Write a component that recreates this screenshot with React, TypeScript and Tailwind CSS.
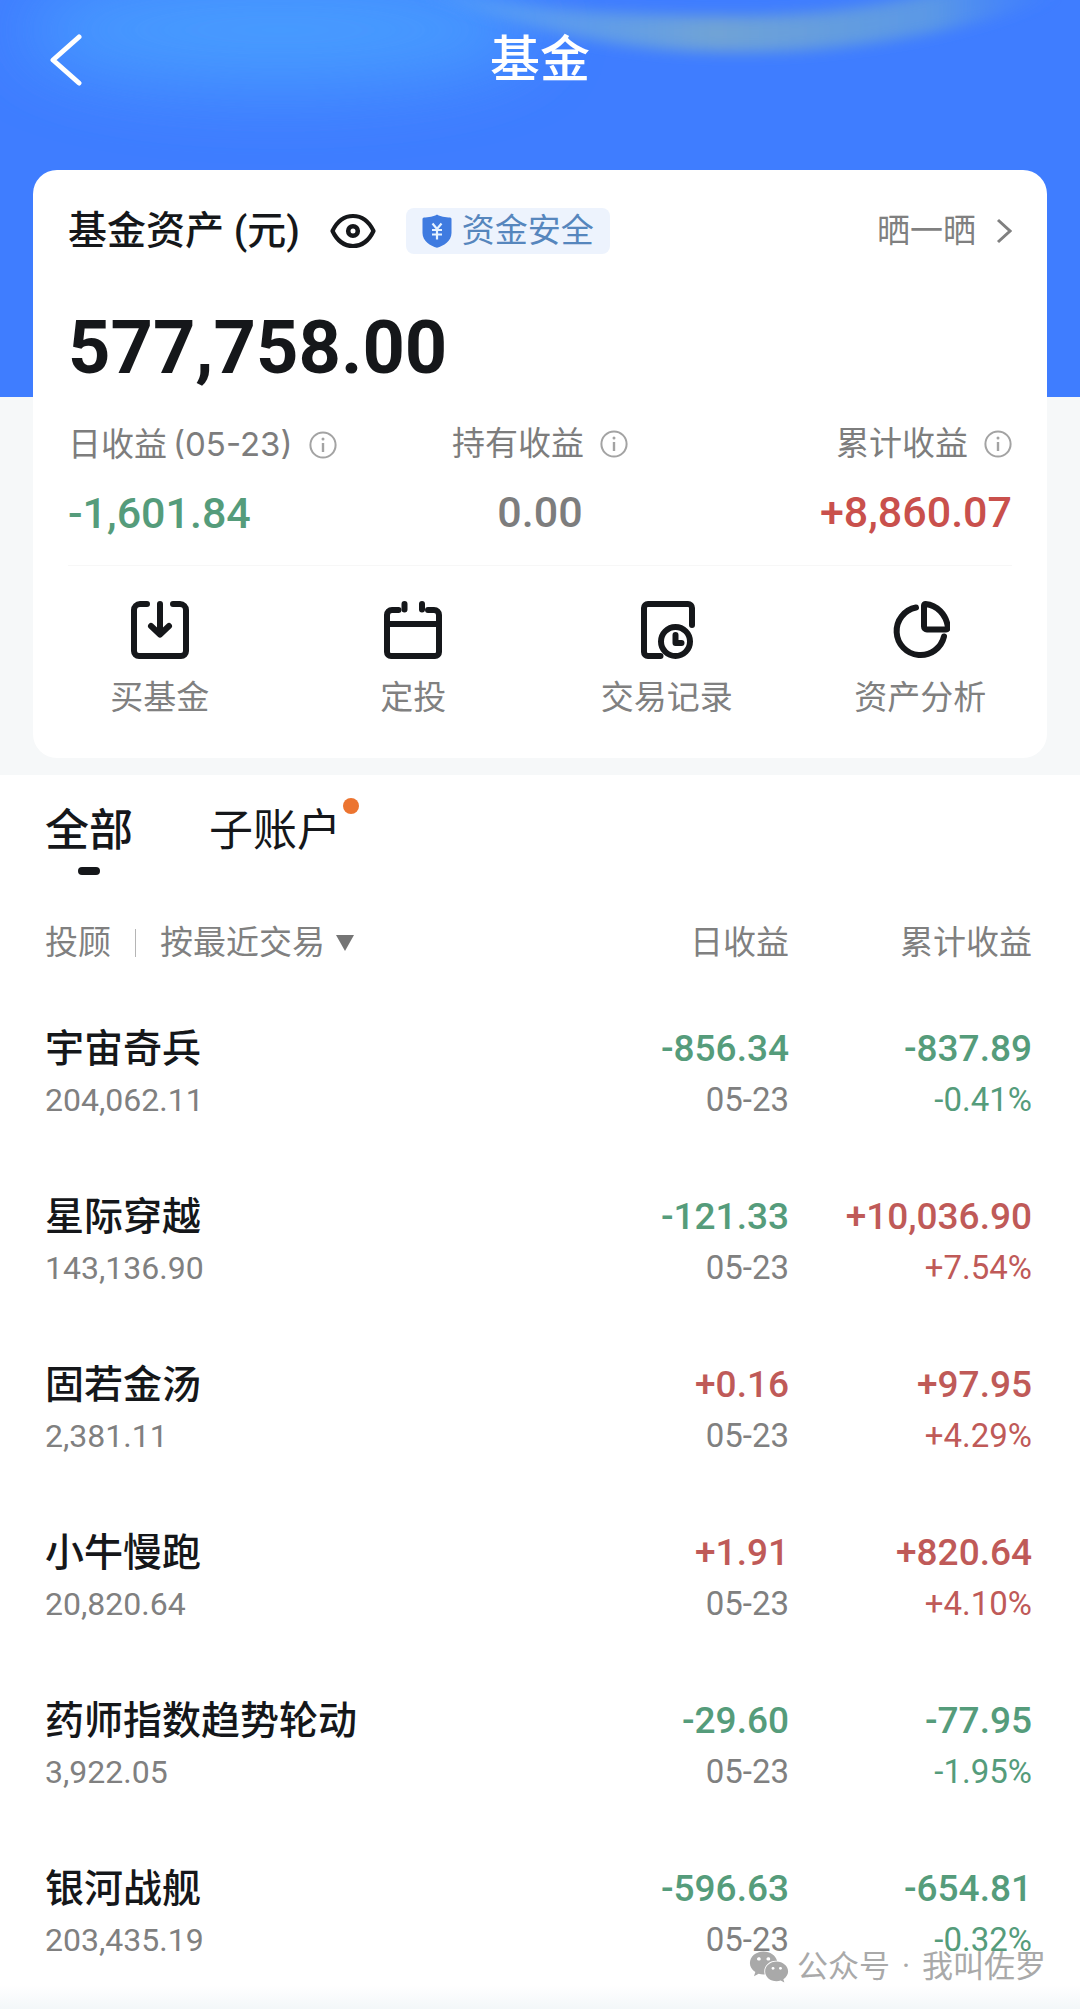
import React from 'react';
import { FaWeixin } from 'react-icons/fa';

interface Holding {
  name: string;
  amount: string;
  daily: string;
  date: string;
  total: string;
  rate: string;
}

const holdings: Holding[] = [
  { name: '宇宙奇兵', amount: '204,062.11', daily: '-856.34', date: '05-23', total: '-837.89', rate: '-0.41%' },
  { name: '星际穿越', amount: '143,136.90', daily: '-121.33', date: '05-23', total: '+10,036.90', rate: '+7.54%' },
  { name: '固若金汤', amount: '2,381.11', daily: '+0.16', date: '05-23', total: '+97.95', rate: '+4.29%' },
  { name: '小牛慢跑', amount: '20,820.64', daily: '+1.91', date: '05-23', total: '+820.64', rate: '+4.10%' },
  { name: '药师指数趋势轮动', amount: '3,922.05', daily: '-29.60', date: '05-23', total: '-77.95', rate: '-1.95%' },
  { name: '银河战舰', amount: '203,435.19', daily: '-596.63', date: '05-23', total: '-654.81', rate: '-0.32%' },
];

// red for gains, green for losses
function trendColor(value: string) {
  return value.startsWith('-') ? 'text-[#559c7b]' : 'text-[#bf5a58]';
}

function InfoIcon() {
  return (
    <svg viewBox="0 0 28 28" className="w-7 h-7 shrink-0" fill="none" stroke="#a3a3a3" strokeWidth="2">
      <circle cx="14" cy="14" r="12.6" />
      <path d="M14 12v9" strokeWidth="2.4" />
      <circle cx="14" cy="8" r="1.5" fill="#a3a3a3" stroke="none" />
    </svg>
  );
}

function EyeIcon() {
  return (
    <svg viewBox="0 0 46 36" className="w-[46px] h-9" fill="none" stroke="#15171a" strokeWidth="4.200">
      <path d="M2.500 18C7 8.500 14 3 23 3s16 5.500 20.500 15C39 27.500 32 33 23 33S7 27.500 2.500 18Z" strokeLinejoin="round" />
      <circle cx="23" cy="18" r="4.800" strokeWidth="4.600" />
    </svg>
  );
}

function ShieldIcon() {
  return (
    <svg viewBox="0 0 30 34" className="w-[30px] h-[34px]">
      <path
        d="M15 0.500C17.500 2.500 24 3.500 28 3.600a1.500 1.500 0 0 1 1.500 1.500V19c0 8-8 13-14.500 14.700C8.500 32 0.500 27 0.500 19V5.100A1.500 1.500 0 0 1 2 3.600C6 3.500 12.500 2.500 15 0.500Z"
        fill="#3f7be0"
      />
      <path d="M10.500 9.500 15 15l4.500-5.500M15 15v10.500M10 16h10M10 20.500h10" fill="none" stroke="#e6f3ff" strokeWidth="2.200" />
    </svg>
  );
}

function BuyIcon() {
  return (
    <>
      <path d="M17 4H10a6 6 0 0 0-6 6v41a5 5 0 0 0 5 5h42a5 5 0 0 0 5-5V10a6 6 0 0 0-6-6h-7" />
      <path d="M30 4v29M21 26l9 8.500 9-8.500" />
    </>
  );
}

function PlanIcon() {
  return (
    <>
      <path d="M15.500 10H9a5 5 0 0 0-5 5v37a4 4 0 0 0 4 4h44a4 4 0 0 0 4-4V15a5 5 0 0 0-5-5h-6" />
      <path d="M4 24h52M21.500 4v5.500M39 4v5.500" />
    </>
  );
}

function RecordIcon() {
  return (
    <>
      <path d="M23.500 56H11a4 4 0 0 1-4-4V8a4 4 0 0 1 4-4h40a4 4 0 0 1 4 4v17" />
      <circle cx="38.500" cy="41.500" r="14.500" />
      <path d="M38.500 35v8h6" />
    </>
  );
}

function PieIcon() {
  return (
    <>
      <path d="M26 7.500A24 24 0 1 0 54 36.500" />
      <path d="M35.500 4C47 5 56 14.500 58 27a2 2 0 0 1-2 2.500H37a3 3 0 0 1-3-3V5.500A1.500 1.500 0 0 1 35.500 4Z" />
    </>
  );
}

const actions = [
  { label: '买基金', icon: <BuyIcon /> },
  { label: '定投', icon: <PlanIcon /> },
  { label: '交易记录', icon: <RecordIcon /> },
  { label: '资产分析', icon: <PieIcon /> },
];

function Header() {
  return (
    <header className="relative grid grid-cols-3 items-center h-[120px] mb-[50px] px-12 text-white">
      <button type="button" aria-label="返回" className="justify-self-start">
        <svg viewBox="0 0 34 54" className="w-[34px] h-[54px]" fill="none" stroke="currentColor" strokeWidth="5">
          <path d="M31 4 5 27l26 23" strokeLinecap="round" strokeLinejoin="round" />
        </svg>
      </button>
      <h1 className="text-center text-[50px] leading-[60px] font-medium">基金</h1>
    </header>
  );
}

// soft light streaks behind the title bar
function HeaderGlow() {
  return (
    <svg viewBox="0 0 1080 397" preserveAspectRatio="none" className="absolute inset-x-0 top-0 w-full h-[397px]">
      <defs>
        <filter id="soft" x="-30%" y="-80%" width="160%" height="260%">
          <feGaussianBlur stdDeviation="7" />
        </filter>
        <filter id="wide" x="-50%" y="-80%" width="200%" height="260%">
          <feGaussianBlur stdDeviation="36" />
        </filter>
        <linearGradient id="streak" x1="430" x2="1060" y1="0" y2="0" gradientUnits="userSpaceOnUse">
          <stop offset="0" stopColor="#57a2fa" stopOpacity="0.6" />
          <stop offset="0.45" stopColor="#70a3d6" />
          <stop offset="0.8" stopColor="#5a98e6" />
          <stop offset="1" stopColor="#4a8cf5" stopOpacity="0" />
        </linearGradient>
      </defs>
      <ellipse cx="280" cy="30" rx="260" ry="55" fill="#4aa0ff" opacity="0.900" filter="url(#wide)" />
      <path
        d="M420 -10C520 8 620 16 730 16S900 2 980 -20L1080 -10C980 28 860 52 740 52S540 34 420 -10Z"
        fill="url(#streak)"
        filter="url(#soft)"
      />
    </svg>
  );
}

function AssetCard() {
  return (
    <section className="relative mx-[33px] rounded-3xl bg-white pt-9 pb-[38px]">
      <div className="px-[35px]">
        <div className="flex items-center h-[50px]">
          <h2 className="text-[39px] font-medium text-[#15171a]">基金资产 (元)</h2>
          <button type="button" aria-label="隐藏金额" className="ml-[30px]">
            <EyeIcon />
          </button>
          <a href="#safety" className="ml-[30px] flex items-center gap-2.5 h-[46px] rounded-lg bg-[#edf3fd] px-4 text-[33px] text-[#5686bd]">
            <ShieldIcon />
            资金安全
          </a>
          <a href="#share" className="ml-auto flex items-center gap-5 text-[33px] text-[#808080]">
            晒一晒
            <svg viewBox="0 0 16 26" className="w-4 h-[26px]" fill="none" stroke="currentColor" strokeWidth="3">
              <path d="m2 2 12 11L2 24" />
            </svg>
          </a>
        </div>

        <p className="mt-[52px] text-[74px] leading-[80px] font-bold text-[#15171a]">577,758.00</p>

        <dl className="mt-[34px] grid grid-cols-[1fr_auto_1fr] border-b border-[#f7f7f7] pb-[26px] text-[#7d7d7d]">
          <div>
            <dt className="flex items-center gap-4 text-[33px] leading-[44px]">
              <span>日收益<span className="ml-1.5 font-[Inter]">(05-23)</span></span>
              <InfoIcon />
            </dt>
            <dd className="mt-5 text-[43px] leading-[52px] font-medium text-[#559c7b]">-1,601.84</dd>
          </div>
          <div className="text-center">
            <dt className="flex items-center gap-4 text-[33px] leading-[44px]">
              持有收益
              <InfoIcon />
            </dt>
            <dd className="mt-5 text-[43px] leading-[52px] font-medium">0.00</dd>
          </div>
          <div className="text-right">
            <dt className="flex items-center justify-end gap-4 text-[33px] leading-[44px]">
              累计收益
              <InfoIcon />
            </dt>
            <dd className="mt-5 text-[43px] leading-[52px] font-medium text-[#c9504c]">+8,860.07</dd>
          </div>
        </dl>
      </div>

      <nav className="mt-[34px] grid grid-cols-4">
        {actions.map((action) => (
          <a key={action.label} href="#action" className="flex flex-col items-center gap-4 text-[33px] leading-[44px] text-[#808080]">
            <svg
              viewBox="0 0 60 60"
              className="w-[60px] h-[60px]"
              fill="none"
              stroke="#15171a"
              strokeWidth="6"
              strokeLinecap="round"
              strokeLinejoin="round"
            >
              {action.icon}
            </svg>
            {action.label}
          </a>
        ))}
      </nav>
    </section>
  );
}

function Tabs() {
  return (
    <div className="flex gap-[76px] text-[44px] leading-[60px] text-[#15171a]">
      <button type="button" className="flex flex-col items-center gap-[6px] font-medium">
        全部
        <span className="w-[22px] h-2 rounded-full bg-[#15171a]" />
      </button>
      <button type="button" className="relative self-start">
        子账户
        <span className="absolute -right-[18px] -top-[3px] w-4 h-4 rounded-full bg-[#ec7430]" />
      </button>
    </div>
  );
}

function HoldingTable() {
  return (
    <table className="mt-[46px] w-full text-[#808080]">
      <thead>
        <tr className="text-[33px] leading-[44px]">
          <th className="pb-6 font-normal text-left">
            <div className="flex items-center">
              <span>投顾</span>
              <span className="mx-6 w-px h-7 bg-[#b5b5b5]" />
              <select aria-label="排序方式" className="appearance-none w-[168px] leading-[44px]">
                <option>按最近交易</option>
              </select>
              <svg viewBox="0 0 18 16" className="w-[18px] h-4 ml-2" fill="#757575">
                <path d="M0 0h18L9 16Z" />
              </svg>
            </div>
          </th>
          <th className="w-[240px] pb-6 font-normal text-right">日收益</th>
          <th className="w-[243px] pb-6 font-normal text-right">累计收益</th>
        </tr>
      </thead>
      <tbody>
        {holdings.map((item) => (
          <tr key={item.name}>
            <td className="py-[33px]">
              <div className="text-[39px] leading-[54px] font-medium text-[#15171a]">{item.name}</div>
              <div className="text-[32px] leading-[48px]">{item.amount}</div>
            </td>
            <td className="py-[33px] text-right">
              <div className={`text-[37px] leading-[54px] font-medium ${trendColor(item.daily)}`}>{item.daily}</div>
              <div className="text-[33px] leading-[48px]">{item.date}</div>
            </td>
            <td className="py-[33px] text-right">
              <div className={`text-[37px] leading-[54px] font-medium ${trendColor(item.total)}`}>{item.total}</div>
              <div className={`text-[33px] leading-[48px] ${trendColor(item.rate)}`}>{item.rate}</div>
            </td>
          </tr>
        ))}
      </tbody>
    </table>
  );
}

export default function App() {
  return (
    <div
      lang="zh-CN"
      className="relative flex flex-col min-h-screen overflow-hidden bg-[linear-gradient(#3f7dff_397px,#f6f8f9_397px)] font-[Roboto,'Noto_Sans_CJK_SC',sans-serif]"
    >
      <HeaderGlow />
      <Header />
      <AssetCard />
      <main className="mt-[17px] grow bg-[linear-gradient(to_top,#f3f7f9,#ffffff_24px)] pt-[26px] pl-[45px] pr-12">
        <Tabs />
        <HoldingTable />
      </main>
      <div className="absolute right-[34px] bottom-5 flex items-center gap-2 text-[31px] leading-[44px] text-[#a9a9a9]">
        <FaWeixin className="w-10 h-9" />
        <span>公众号</span>
        <span className="px-1">·</span>
        <span>我叫佐罗</span>
      </div>
    </div>
  );
}
